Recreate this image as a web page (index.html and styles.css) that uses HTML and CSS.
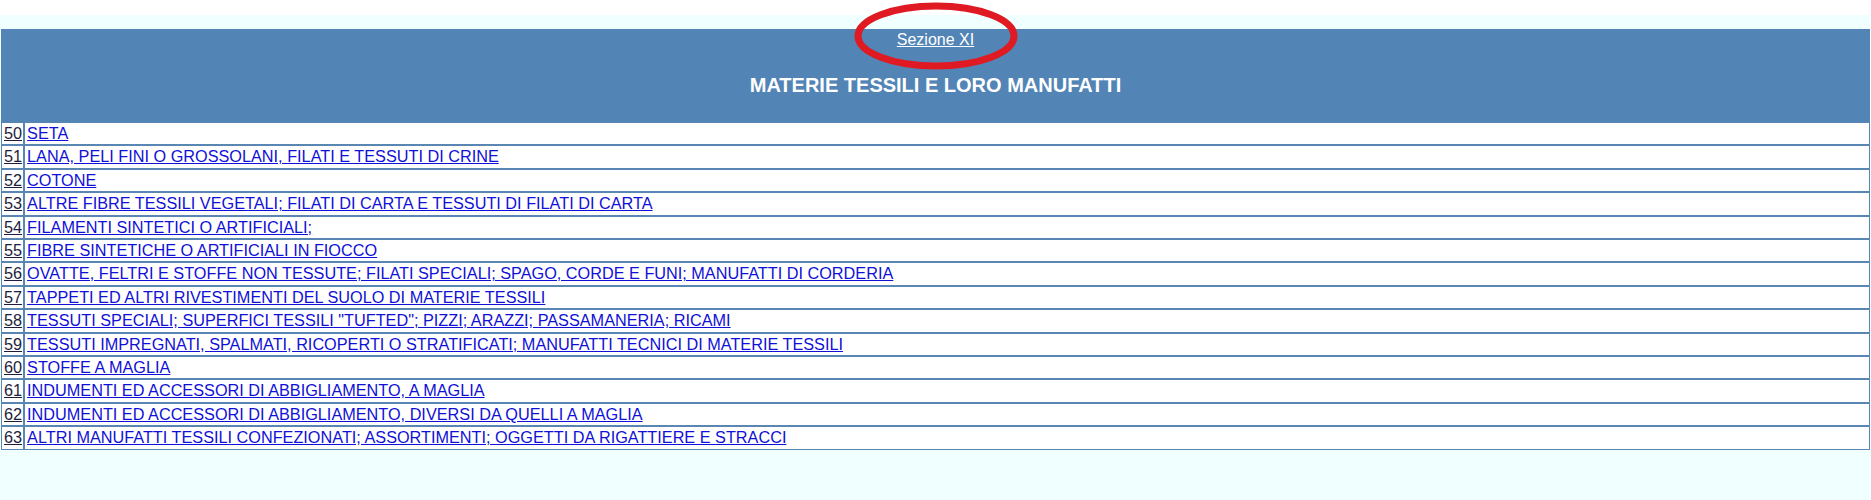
FILE: index.html
```html
<!DOCTYPE html>
<html lang="it">
<head>
<meta charset="utf-8">
<title>Sezione XI</title>
<link rel="stylesheet" href="styles.css">
</head>
<body>
<div class="topstrip"></div>
<div class="page">
  <table class="sezione">
    <thead>
      <tr>
        <th colspan="2" class="head">
          <a href="#" class="sez-link">Sezione XI</a>
          <div class="title">MATERIE TESSILI E LORO MANUFATTI</div>
        </th>
      </tr>
    </thead>
    <tbody>
      <tr><td class="num"><a href="#">50</a></td><td class="desc"><a href="#">SETA</a></td></tr>
      <tr><td class="num"><a href="#">51</a></td><td class="desc"><a href="#">LANA, PELI FINI O GROSSOLANI, FILATI E TESSUTI DI CRINE</a></td></tr>
      <tr><td class="num"><a href="#">52</a></td><td class="desc"><a href="#">COTONE</a></td></tr>
      <tr><td class="num"><a href="#">53</a></td><td class="desc"><a href="#">ALTRE FIBRE TESSILI VEGETALI; FILATI DI CARTA E TESSUTI DI FILATI DI CARTA</a></td></tr>
      <tr><td class="num"><a href="#">54</a></td><td class="desc"><a href="#">FILAMENTI SINTETICI O ARTIFICIALI;</a></td></tr>
      <tr><td class="num"><a href="#">55</a></td><td class="desc"><a href="#">FIBRE SINTETICHE O ARTIFICIALI IN FIOCCO</a></td></tr>
      <tr><td class="num"><a href="#">56</a></td><td class="desc"><a href="#">OVATTE, FELTRI E STOFFE NON TESSUTE; FILATI SPECIALI; SPAGO, CORDE E FUNI; MANUFATTI DI CORDERIA</a></td></tr>
      <tr><td class="num"><a href="#">57</a></td><td class="desc"><a href="#">TAPPETI ED ALTRI RIVESTIMENTI DEL SUOLO DI MATERIE TESSILI</a></td></tr>
      <tr><td class="num"><a href="#">58</a></td><td class="desc"><a href="#">TESSUTI SPECIALI; SUPERFICI TESSILI "TUFTED"; PIZZI; ARAZZI; PASSAMANERIA; RICAMI</a></td></tr>
      <tr><td class="num"><a href="#">59</a></td><td class="desc"><a href="#">TESSUTI IMPREGNATI, SPALMATI, RICOPERTI O STRATIFICATI; MANUFATTI TECNICI DI MATERIE TESSILI</a></td></tr>
      <tr><td class="num"><a href="#">60</a></td><td class="desc"><a href="#">STOFFE A MAGLIA</a></td></tr>
      <tr><td class="num"><a href="#">61</a></td><td class="desc"><a href="#">INDUMENTI ED ACCESSORI DI ABBIGLIAMENTO, A MAGLIA</a></td></tr>
      <tr><td class="num"><a href="#">62</a></td><td class="desc"><a href="#">INDUMENTI ED ACCESSORI DI ABBIGLIAMENTO, DIVERSI DA QUELLI A MAGLIA</a></td></tr>
      <tr><td class="num"><a href="#">63</a></td><td class="desc"><a href="#">ALTRI MANUFATTI TESSILI CONFEZIONATI; ASSORTIMENTI; OGGETTI DA RIGATTIERE E STRACCI</a></td></tr>
    </tbody>
  </table>
</div>
<svg class="mark" width="172" height="72" viewBox="0 0 172 72" aria-hidden="true">
  <ellipse cx="86" cy="36" rx="78" ry="30" fill="none" stroke="#e01a22" stroke-width="7"/>
</svg>
</body>
</html>
```
FILE: styles.css
```css
html, body {
  margin: 0;
  padding: 0;
}
body {
  background: #f0ffff;
  font-family: "Liberation Sans", Arial, sans-serif;
  font-size: 16px;
  position: relative;
}
.topstrip {
  height: 15px;
  background: #ffffff;
}
.page {
  padding: 14px 1px 0 1px;
}
.sezione {
  width: 100%;
  border-collapse: separate;
  border-spacing: 0;
}
.head {
  background: #5284b5;
  border: 1px solid #5284b5;
  padding: 0;
  height: 91px;
  vertical-align: top;
  text-align: center;
  font-weight: normal;
}
.sez-link {
  display: inline-block;
  margin-top: 1px;
  color: #ffffff;
  text-decoration: underline;
  line-height: 18px;
}
.title {
  margin-top: 25px;
  color: #ffffff;
  font-weight: bold;
  font-size: 20px;
  line-height: 23px;
}
.sezione td {
  border: 1px solid #5a86b3;
  background: #ffffff;
  padding: 1px 2px;
  line-height: 19.4px;
  font-size: 16.25px;
  white-space: nowrap;
}
.sezione td.num {
  width: 1%;
  padding: 1px 1px 1px 2px;
}
.num a {
  color: #1e1e3c;
}
.desc a {
  color: #1010d8;
}
.mark {
  position: absolute;
  left: 850px;
  top: 0px;
}
```
